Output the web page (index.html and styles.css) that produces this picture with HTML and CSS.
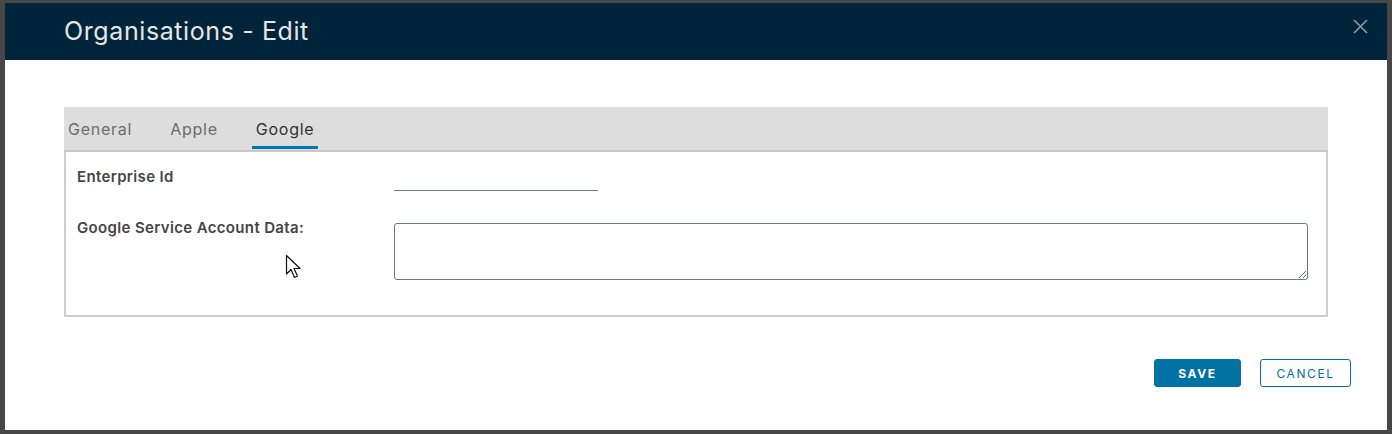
FILE: index.html
```html
<!DOCTYPE html>
<html>
<head>
<meta charset="utf-8">
<link rel="stylesheet" href="styles.css">
</head>
<body>
<div class="dialog">
  <div class="header">
    <h1 class="title">Organisations - Edit</h1>
    <button class="close" aria-label="Close">
      <svg width="15" height="15" viewBox="0 0 15 15"><path d="M1 1 L14 14 M14 1 L1 14" stroke="#8d9aa3" stroke-width="1.6" fill="none"/></svg>
    </button>
  </div>
  <div class="body">
    <div class="tabs">
      <span class="tab">General</span>
      <span class="tab">Apple</span>
      <span class="tab active">Google</span>
    </div>
    <div class="panel">
      <div class="row">
        <label class="label">Enterprise Id</label>
        <div class="field"><input class="line-input" type="text"></div>
      </div>
      <div class="row row-ta">
        <label class="label">Google Service Account Data:</label>
        <div class="field grow"><textarea class="ta"></textarea></div>
      </div>
    </div>
    <div class="actions">
      <button class="btn primary">SAVE</button>
      <button class="btn outline">CANCEL</button>
    </div>
  </div>
  <svg class="cursor" width="20" height="28" viewBox="0 0 20 28"><path d="M1.5 1.5 L1.5 20 L6 15.5 L9.5 23.5 L12.5 22 L9 14.5 L15 14.5 Z" fill="#fff" stroke="#111" stroke-width="1.2" stroke-linejoin="round"/></svg>
</div>
</body>
</html>
```

FILE: styles.css
```css
html, body { margin: 0; padding: 0; }
body {
  background: #474747;
  width: 1392px;
  height: 434px;
  overflow: hidden;
  font-family: Inter, "Open Sans", sans-serif;
}
.dialog {
  position: relative;
  margin: 3px 0 0 5px;
  width: 1382px;
  height: 427px;
  background: #fff;
  display: flex;
  flex-direction: column;
}
.header {
  height: 57px;
  background: #00253a;
  display: flex;
  align-items: center;
  justify-content: space-between;
  padding: 0 19px 0 59px;
  box-sizing: border-box;
}
.title {
  margin: 0;
  font-weight: 400;
  font-size: 25px;
  color: #e6e6e6;
  letter-spacing: 0.6px;
  margin-top: -2px;
}
.close {
  background: none;
  border: 0;
  padding: 0;
  margin-top: -10px;
  display: flex;
}
.body {
  padding: 47px 59px 0 59px;
  display: flex;
  flex-direction: column;
}
.tabs {
  height: 43px;
  background: #dddddd;
  border-bottom: 2px solid #c8c8c8;
  display: flex;
  gap: 30px;
}
.tab {
  height: 42px;
  padding: 0 4px;
  font-size: 16px;
  letter-spacing: 0.75px;
  color: #6c6c6c;
  display: flex;
  align-items: center;
  box-sizing: border-box;
  border-bottom: 3px solid transparent;
  padding-top: 4px;
}
.tab.active {
  color: #333;
  border-bottom-color: #0079ad;
}
.panel {
  border: 2px solid #cccccc;
  border-top: 0;
  height: 165px;
  box-sizing: border-box;
  padding: 15px 18px 0 11px;
  display: flex;
  flex-direction: column;
}
.row { display: flex; }
.row-ta { margin-top: 30px; }
.label {
  width: 317px;
  flex: none;
  font-size: 15px;
  letter-spacing: 0.35px;
  font-weight: 600;
  color: #454545;
}
.row-ta .label { margin-top: -3px; }
.field.grow { flex: 1; }
.line-input {
  width: 204px;
  border: 0;
  border-bottom: 1px solid #6f7d86;
  height: 23px;
  padding: 0;
  outline: none;
  display: block;
}
.ta {
  display: block;
  width: 100%;
  height: 57px;
  box-sizing: border-box;
  border: 1px solid #6a7a84;
  border-radius: 3px;
  margin-top: 2px;
  resize: vertical;
}
.actions {
  display: flex;
  justify-content: flex-end;
  gap: 19px;
  margin-top: 42px;
  margin-right: -23px;
}
.btn {
  height: 28px;
  border-radius: 3px;
  font-family: Inter, sans-serif;
  font-size: 12px;
  letter-spacing: 1.6px;
  cursor: pointer;
}
.primary {
  width: 87px;
  background: #0072a3;
  border: 1px solid #0072a3;
  color: #fff;
  font-weight: 700;
}
.outline {
  width: 91px;
  background: #fff;
  border: 1px solid #0072a3;
  color: #0072a3;
  font-weight: 400;
}
.cursor {
  position: absolute;
  left: 280px;
  top: 251px;
}
```
